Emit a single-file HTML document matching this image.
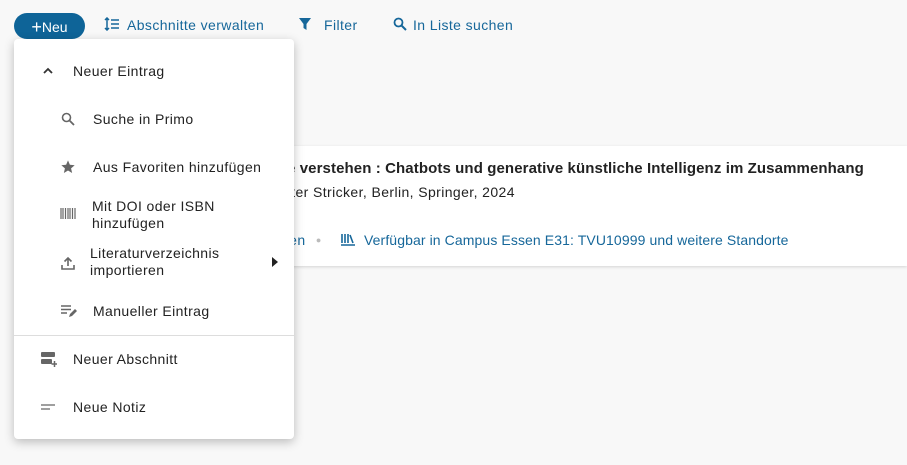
<!DOCTYPE html>
<html><head><meta charset="utf-8"><style>
*{box-sizing:border-box;margin:0;padding:0}
body{width:907px;height:465px;background:#f8f8f8;font-family:"Liberation Sans",sans-serif;position:relative;overflow:hidden;color:#222;letter-spacing:0.4px}
.a{position:absolute;white-space:nowrap}
.btn{left:14px;top:13px;width:71px;height:26px;border-radius:13px;background:#0e6498;color:#fff;font-size:14px;line-height:26px;text-align:center;letter-spacing:0}
.tb{color:#16679a;font-size:14px;top:17px}
.card{left:280px;top:146px;width:627px;height:120px;background:#fff;box-shadow:0 1px 3px rgba(0,0,0,.15)}
.menu{left:14px;top:39px;width:280px;height:400px;background:#fff;border-radius:4px;box-shadow:0 3px 10px rgba(0,0,0,.25)}
.mi{font-size:14px;color:#222}
svg{position:absolute}
</style></head><body>
<div class="a btn"><span style="font-size:18px;position:relative;top:1px">+</span>Neu</div>
<svg style="left:104px;top:17px" width="16" height="14" viewBox="0 0 16 14"><path d="M3 1v12M1 3l2-2 2 2M1 11l2 2 2-2" stroke="#16679a" stroke-width="1.5" fill="none"/><path d="M7 3h8M7 7h8M7 11h8" stroke="#16679a" stroke-width="1.6"/></svg>
<div class="a tb" style="left:127px">Abschnitte verwalten</div>
<svg style="left:299px;top:18px" width="12" height="12" viewBox="0 0 12 12"><path d="M0 0h12L7.5 6v6L4.5 10V6z" fill="#16679a"/></svg>
<div class="a tb" style="left:324px">Filter</div>
<svg style="left:393px;top:17px" width="14" height="14" viewBox="0 0 14 14"><circle cx="5.5" cy="5.5" r="4" stroke="#16679a" stroke-width="1.8" fill="none"/><path d="M8.5 8.5l4.5 4.5" stroke="#16679a" stroke-width="2"/></svg>
<div class="a tb" style="left:413px">In Liste suchen</div>

<div class="a card"></div>
<div class="a" style="left:287px;top:160px;font-size:15px;font-weight:bold;color:#222;letter-spacing:0.1px">e verstehen : Chatbots und generative künstliche Intelligenz im Zusammenhang</div>
<div class="a" style="left:283px;top:184px;font-size:14px">eter Stricker, Berlin, Springer, 2024</div>
<div class="a" style="left:281px;top:232px;font-size:14px;color:#16679a">gen <span style="color:#bbb;font-size:9px;margin:0 0 0 6px;position:relative;top:-2px">●</span></div>
<svg style="left:341px;top:233px" width="14" height="13" viewBox="0 0 14 13"><path d="M1 1v9M4 1v9M7 1v9M9 2l3 8M0 12h14" stroke="#16679a" stroke-width="1.6" fill="none"/></svg>
<div class="a" style="left:364px;top:232px;font-size:14px;color:#16679a;letter-spacing:0.1px">Verfügbar in Campus Essen E31: TVU10999 und weitere Standorte</div>

<div class="a menu"></div>
<svg style="left:43px;top:67px" width="10" height="7" viewBox="0 0 10 7"><path d="M1 6l4-4 4 4" stroke="#333" stroke-width="1.8" fill="none"/></svg>
<div class="a mi" style="left:73px;top:63px">Neuer Eintrag</div>
<svg style="left:61px;top:112px" width="14" height="14" viewBox="0 0 14 14"><circle cx="5.5" cy="5.5" r="4" stroke="#666" stroke-width="1.6" fill="none"/><path d="M8.5 8.5l4.5 4.5" stroke="#666" stroke-width="1.8"/></svg>
<div class="a mi" style="left:93px;top:111px">Suche in Primo</div>
<svg style="left:60px;top:159px" width="16" height="16" viewBox="0 0 24 24"><path d="M12 17.3l6.2 3.7-1.6-7 5.4-4.7-7.2-.6L12 2 9.2 8.7 2 9.3l5.4 4.7-1.6 7z" fill="#666"/></svg>
<div class="a mi" style="left:93px;top:159px">Aus Favoriten hinzufügen</div>
<svg style="left:60px;top:208px" width="16" height="11" viewBox="0 0 16 11"><path d="M1 0v11M3 0v11M5.5 0v11M8 0v11M10 0v11M12.5 0v11M15 0v11" stroke="#666" stroke-width="1.2"/></svg>
<div class="a mi" style="left:92px;top:198px;line-height:17px">Mit DOI oder ISBN<br>hinzufügen</div>
<svg style="left:61px;top:256px" width="14" height="14" viewBox="0 0 14 14"><path d="M7 10V2M3.5 5.5L7 2l3.5 3.5M1 9v4h12V9" stroke="#666" stroke-width="1.6" fill="none"/></svg>
<div class="a mi" style="left:90px;top:245px;line-height:17px">Literaturverzeichnis<br>importieren</div>
<svg style="left:272px;top:257px" width="6" height="10" viewBox="0 0 6 10"><path d="M0 0l6 5-6 5z" fill="#222"/></svg>
<svg style="left:61px;top:305px" width="16" height="13" viewBox="0 0 16 13"><path d="M0 1h10M0 4.5h10M0 8h6" stroke="#666" stroke-width="1.6"/><path d="M8 12l1-3 5-5 2 2-5 5z" fill="#666"/></svg>
<div class="a mi" style="left:93px;top:303px">Manueller Eintrag</div>
<div class="a" style="left:14px;top:335px;width:280px;height:1px;background:#ddd"></div>
<svg style="left:41px;top:352px" width="16" height="15" viewBox="0 0 16 15"><rect x="0" y="0" width="14" height="5" rx="1" fill="#666"/><rect x="0" y="7" width="11" height="5" rx="1" fill="#666"/><path d="M13.5 9v6M10.5 12h6" stroke="#666" stroke-width="1.5"/></svg>
<div class="a mi" style="left:73px;top:351px">Neuer Abschnitt</div>
<svg style="left:41px;top:404px" width="14" height="6" viewBox="0 0 14 6"><path d="M0 1h14M0 5h9" stroke="#666" stroke-width="1.3"/></svg>
<div class="a mi" style="left:73px;top:399px">Neue Notiz</div>
</body></html>
